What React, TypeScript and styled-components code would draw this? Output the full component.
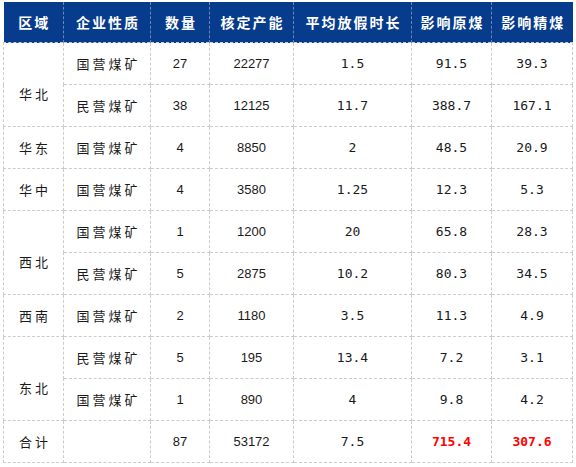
import React from "react";
import styled, { createGlobalStyle } from "styled-components";

type Row = {
  region?: string;
  span?: number;
  kind: string;
  count: string;
  capacity: string;
  hours: string;
  raw: string;
  clean: string;
};

const rows: Row[] = [
  { region: "华北", span: 2, kind: "国营煤矿", count: "27", capacity: "22277", hours: "1.5", raw: "91.5", clean: "39.3" },
  { kind: "民营煤矿", count: "38", capacity: "12125", hours: "11.7", raw: "388.7", clean: "167.1" },
  { region: "华东", span: 1, kind: "国营煤矿", count: "4", capacity: "8850", hours: "2", raw: "48.5", clean: "20.9" },
  { region: "华中", span: 1, kind: "国营煤矿", count: "4", capacity: "3580", hours: "1.25", raw: "12.3", clean: "5.3" },
  { region: "西北", span: 2, kind: "国营煤矿", count: "1", capacity: "1200", hours: "20", raw: "65.8", clean: "28.3" },
  { kind: "民营煤矿", count: "5", capacity: "2875", hours: "10.2", raw: "80.3", clean: "34.5" },
  { region: "西南", span: 1, kind: "国营煤矿", count: "2", capacity: "1180", hours: "3.5", raw: "11.3", clean: "4.9" },
  { region: "东北", span: 2, kind: "民营煤矿", count: "5", capacity: "195", hours: "13.4", raw: "7.2", clean: "3.1" },
  { kind: "国营煤矿", count: "1", capacity: "890", hours: "4", raw: "9.8", clean: "4.2" },
];

const headers = ["区域", "企业性质", "数量", "核定产能", "平均放假时长", "影响原煤", "影响精煤"];
const widths = [60, 87, 59, 84, 118, 80, 81];

const GlobalStyle = createGlobalStyle`
  html, body {
    margin: 0;
    padding: 0;
    background: #ffffff;
  }
`;

const Page = styled.div`
  padding: 2px 0 0 3px;
`;

const Table = styled.table`
  border-collapse: collapse;
  table-layout: fixed;
  width: 569px;
`;

const HeadCell = styled.th`
  height: 40px;
  padding: 0 0 0 2px;
  background: #073b8c;
  color: #ffffff;
  font-family: "Noto Sans CJK SC", sans-serif;
  font-size: 14px;
  font-weight: 700;
  letter-spacing: 2px;
  text-align: center;
  border-left: 1px dashed #6f86b4;
  &:first-child {
    border-left: none;
  }
`;

const Cell = styled.td<{ $mono?: boolean; $red?: boolean; $cjk?: boolean; $low?: boolean }>`
  height: 41px;
  padding: ${(p) => (p.$low ? "18px 0 0 3px" : p.$cjk ? "0 0 0 3px" : "0")};
  border: 1px dashed #cccccc;
  text-align: center;
  vertical-align: middle;
  color: ${(p) => (p.$red ? "#ff0000" : "#1a1a1a")};
  font-weight: ${(p) => (p.$red ? 700 : 400)};
  font-family: ${(p) =>
    p.$mono
      ? `"DejaVu Sans Mono", monospace`
      : p.$cjk
      ? `"Noto Sans CJK SC", sans-serif`
      : `"Liberation Sans", Arial, sans-serif`};
  font-size: 13px;
  letter-spacing: ${(p) => (p.$cjk ? "3px" : "0")};
`;

export default function App() {
  return (
    <>
      <GlobalStyle />
      <Page>
        <Table>
          <colgroup>
            {widths.map((w, i) => (
              <col key={i} style={{ width: w }} />
            ))}
          </colgroup>
          <thead>
            <tr>
              {headers.map((h) => (
                <HeadCell key={h}>{h}</HeadCell>
              ))}
            </tr>
          </thead>
          <tbody>
            {rows.map((r, i) => (
              <tr key={i}>
                {r.region && (
                  <Cell $cjk $low={(r.span ?? 1) > 1} rowSpan={r.span}>
                    {r.region}
                  </Cell>
                )}
                <Cell $cjk>{r.kind}</Cell>
                <Cell>{r.count}</Cell>
                <Cell>{r.capacity}</Cell>
                <Cell $mono>{r.hours}</Cell>
                <Cell $mono>{r.raw}</Cell>
                <Cell $mono>{r.clean}</Cell>
              </tr>
            ))}
            <tr>
              <Cell $cjk>合计</Cell>
              <Cell />
              <Cell>87</Cell>
              <Cell>53172</Cell>
              <Cell $mono>7.5</Cell>
              <Cell $mono $red>715.4</Cell>
              <Cell $mono $red>307.6</Cell>
            </tr>
          </tbody>
        </Table>
      </Page>
    </>
  );
}
